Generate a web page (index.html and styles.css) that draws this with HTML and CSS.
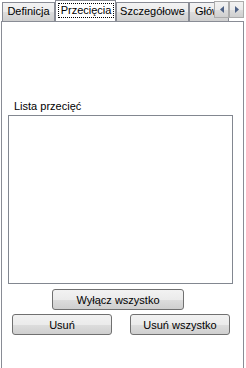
FILE: index.html
```html
<!DOCTYPE html>
<html>
<head>
<meta charset="utf-8">
<link rel="stylesheet" href="styles.css">
</head>
<body>
<div class="window">
  <div class="tabstrip">
    <div class="tab t1">Definicja</div>
    <div class="tab selected"><span class="focus">Przecięcia</span></div>
    <div class="tab t3">Szczegółowe</div>
    <div class="tab t4">Główne</div>
    <div class="scroller">
      <div class="sbtn"><svg width="4" height="7" viewBox="0 0 4 7"><path d="M4 0 L0 3.5 L4 7Z" fill="#4d6185"/></svg></div>
      <div class="sbtn"><svg width="4" height="7" viewBox="0 0 4 7"><path d="M0 0 L4 3.5 L0 7Z" fill="#4d6185"/></svg></div>
    </div>
  </div>
  <div class="panel">
    <div class="label">Lista przecięć</div>
    <div class="listbox"></div>
    <div class="row center"><button class="btn wide">Wyłącz wszystko</button></div>
    <div class="row split"><button class="btn">Usuń</button><button class="btn">Usuń wszystko</button></div>
  </div>
</div>
</body>
</html>
```
FILE: styles.css
```css
html, body {
  margin: 0;
  padding: 0;
  background: #ffffff;
  font-family: "Liberation Sans", Arial, sans-serif;
  font-size: 11px;
  color: #000;
}
.window {
  width: 246px;
  height: 368px;
  overflow: hidden;
}
.tabstrip {
  position: relative;
  display: flex;
  align-items: flex-end;
  height: 21px;
  padding-left: 2px;
  overflow: hidden;
}
.tab {
  box-sizing: border-box;
  height: 19px;
  border: 1px solid #898c95;
  border-bottom: none;
  background: linear-gradient(#f3f3f3, #ebebeb 50%, #dddddd 51%, #cfcfcf);
  line-height: 17px;
  white-space: nowrap;
  text-align: center;
  flex: none;
  overflow: hidden;
}
.t1 { width: 53px; }
.t3 { width: 73px; }
.t4 { width: 40px; text-align: left; padding-left: 5px; }
.tab.selected {
  position: relative;
  z-index: 1;
  width: 61px;
  height: 22px;
  margin-bottom: -1px;
  background: #ffffff;
  line-height: 19px;
  text-align: left;
}
.focus {
  box-sizing: border-box;
  display: block;
  margin: 2px 0 0 2px;
  width: 56px;
  height: 15px;
  border: 1px dotted #000;
  line-height: 13px;
  text-align: center;
}
.scroller {
  position: absolute;
  right: 2px;
  top: 1px;
  display: flex;
  z-index: 2;
}
.sbtn {
  box-sizing: border-box;
  width: 15px;
  height: 17px;
  border: 1px solid #acacac;
  background: linear-gradient(#f2f2f2, #ebebeb 50%, #dddddd 51%, #cfcfcf);
  display: flex;
  align-items: center;
  justify-content: center;
}
.panel {
  box-sizing: border-box;
  margin-left: 1px;
  width: 243px;
  height: 348px;
  border: 1px solid #898c95;
  border-bottom: none;
  background: #fff;
  padding-top: 77px;
}
.label {
  padding-left: 12px;
  line-height: 14px;
  height: 16px;
}
.listbox {
  box-sizing: border-box;
  margin-left: 6px;
  width: 225px;
  height: 169px;
  border: 1px solid #828790;
  background: #fff;
}
.row {
  display: flex;
}
.center {
  padding-left: 50px;
  margin-top: 5px;
}
.split {
  padding-left: 10px;
  gap: 18px;
  margin-top: 4px;
}
.btn {
  box-sizing: border-box;
  font-family: "Liberation Sans", Arial, sans-serif;
  font-size: 11px;
  color: #000;
  width: 100px;
  height: 21px;
  padding: 0;
  border: 1px solid #707070;
  border-radius: 3px;
  background: linear-gradient(#f2f2f2, #ebebeb 50%, #dddddd 51%, #cfcfcf);
}
.btn.wide { width: 132px; }
```
